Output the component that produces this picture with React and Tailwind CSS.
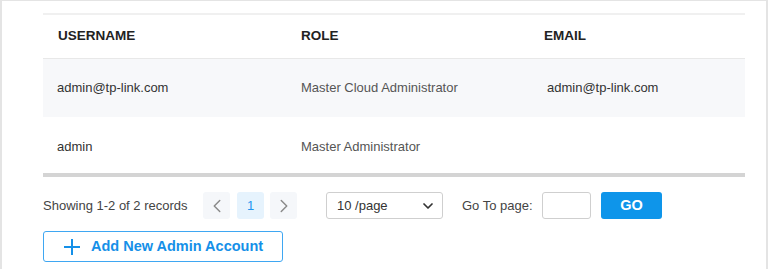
import { ChevronLeft, ChevronRight, ChevronDown } from 'lucide-react';

const admins = [
  { username: 'admin@tp-link.com', role: 'Master Cloud Administrator', email: 'admin@tp-link.com', shaded: true },
  { username: 'admin', role: 'Master Administrator', email: '', shaded: false },
];

const AdminTable = () => (
  <div className="border-t-2 border-[#f0f0f0]">
    <div className="grid grid-cols-[243px_243px_1fr] h-[44px] items-center border-b border-[#e8e8e8] text-[13.5px] font-bold text-[#222]">
      <div className="pl-[15px]">USERNAME</div>
      <div className="pl-[15px]">ROLE</div>
      <div className="pl-[15px]">EMAIL</div>
    </div>
    {admins.map((row) => (
      <div
        key={row.username}
        className={`grid grid-cols-[243px_243px_1fr] items-center text-[13px] ${
          row.shaded ? 'h-[58px] bg-[#f7f8fa]' : 'h-[56px] bg-white pt-[3px]'
        }`}
      >
        <div className="pl-[14px] text-[#333]">{row.username}</div>
        <div className="pl-[15px] text-[#555]">{row.role}</div>
        <div className="pl-[18px] text-[#333]">{row.email}</div>
      </div>
    ))}
    <div className="h-[4px] bg-[#d4d4d4]" />
  </div>
);

const Pagination = () => (
  <div className="mt-[15px] flex items-center h-[27px] text-[13px] text-[#444]">
    <div className="w-[160px]">Showing 1-2 of 2 records</div>
    <button className="w-[27px] h-[27px] rounded-[3px] bg-[#f5f7fa] flex items-center justify-center text-[#8a8a8a]">
      <ChevronLeft className="w-[22px] h-[22px]" strokeWidth={1.6} />
    </button>
    <button className="ml-[7px] w-[27px] h-[27px] rounded-[3px] bg-[#e6f3fd] flex items-center justify-center text-[#1e96f0]">
      1
    </button>
    <button className="ml-[6px] w-[27px] h-[27px] rounded-[3px] bg-[#f5f7fa] flex items-center justify-center text-[#8a8a8a]">
      <ChevronRight className="w-[22px] h-[22px]" strokeWidth={1.6} />
    </button>
    <div className="ml-[29px] w-[117px] h-[27px] border border-[#cfcfcf] rounded-[3px] flex items-center justify-between pl-[10px] pr-[6px] text-[#333]">
      <span>10 /page</span>
      <ChevronDown className="w-[16px] h-[16px] text-[#333]" strokeWidth={2.6} />
    </div>
    <div className="ml-[19px] w-[80px] text-[#444]">Go To page:</div>
    <input className="w-[49px] h-[27px] border border-[#cfcfcf] rounded-[3px] bg-white outline-none" />
    <button className="ml-[10px] w-[61px] h-[27px] rounded-[3px] bg-[#0e95ea] text-white font-bold text-[14.5px] flex items-center justify-center">
      GO
    </button>
  </div>
);

export default function App() {
  return (
    <div className="w-[768px] h-[269px] bg-white border-t border-x-2 border-[#e4e4e4] pt-[12px] pl-[41px] pr-[21px] font-['Liberation_Sans',Arial,sans-serif] overflow-hidden">
      <AdminTable />
      <Pagination />
      <button className="mt-[12px] w-[240px] h-[31px] border border-[#3fa7f2] rounded-[3px] flex items-center pl-[20px] text-[#1590e8] font-bold text-[14.5px]">
        <svg width="16" height="16" viewBox="0 0 16 16" className="shrink-0">
          <path d="M8 0v16M0 8h16" stroke="currentColor" strokeWidth="2" />
        </svg>
        <span className="ml-[11px]">Add New Admin Account</span>
      </button>
    </div>
  );
}
